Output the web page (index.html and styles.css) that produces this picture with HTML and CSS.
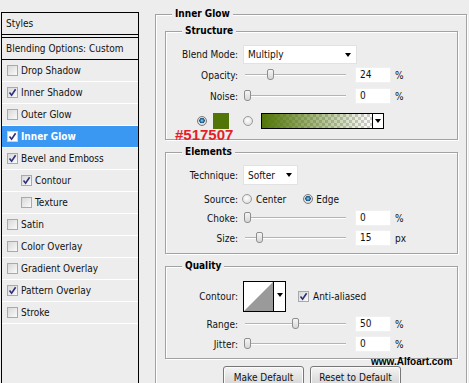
FILE: index.html
```html
<!DOCTYPE html>
<html>
<head>
<meta charset="utf-8">
<link rel="stylesheet" href="styles.css">
</head>
<body>
<div class="app">
  <aside class="sp">
    <div class="sp-head">Styles</div>
    <div class="sp-blend">Blending Options: Custom</div>
    <ul class="sp-list">
      <li class="sp-item"><span class="cb"></span>Drop Shadow</li>
      <li class="sp-item"><span class="cb on"><svg viewBox="0 0 9 9"><path d="M1.5 4.5 L3.6 7.2 L7.6 1.2"/></svg></span>Inner Shadow</li>
      <li class="sp-item"><span class="cb"></span>Outer Glow</li>
      <li class="sp-item sel"><span class="cb on"><svg viewBox="0 0 9 9"><path d="M1.5 4.5 L3.6 7.2 L7.6 1.2"/></svg></span>Inner Glow</li>
      <li class="sp-item"><span class="cb on"><svg viewBox="0 0 9 9"><path d="M1.5 4.5 L3.6 7.2 L7.6 1.2"/></svg></span>Bevel and Emboss</li>
      <li class="sp-item sub"><span class="cb on"><svg viewBox="0 0 9 9"><path d="M1.5 4.5 L3.6 7.2 L7.6 1.2"/></svg></span>Contour</li>
      <li class="sp-item sub"><span class="cb"></span>Texture</li>
      <li class="sp-item"><span class="cb"></span>Satin</li>
      <li class="sp-item"><span class="cb"></span>Color Overlay</li>
      <li class="sp-item"><span class="cb"></span>Gradient Overlay</li>
      <li class="sp-item"><span class="cb on"><svg viewBox="0 0 9 9"><path d="M1.5 4.5 L3.6 7.2 L7.6 1.2"/></svg></span>Pattern Overlay</li>
      <li class="sp-item"><span class="cb"></span>Stroke</li>
    </ul>
  </aside>

  <main class="dialog">
    <section class="grp outer">
      <div class="legend">Inner Glow</div>

      <section class="grp inner structure">
        <div class="legend">Structure</div>
        <div class="row r-blend">
          <span class="lbl">Blend Mode:</span>
          <div class="select sel-blend"><span>Multiply</span><i class="arr"></i></div>
        </div>
        <div class="row r-opacity">
          <span class="lbl">Opacity:</span>
          <div class="slider"><i class="track"></i><i class="thumb" style="left:24px"></i></div>
          <div class="num">24</div><span class="unit">%</span>
        </div>
        <div class="row r-noise">
          <span class="lbl">Noise:</span>
          <div class="slider"><i class="track"></i><i class="thumb" style="left:1px"></i></div>
          <div class="num">0</div><span class="unit">%</span>
        </div>
        <div class="row r-color">
          <i class="radio on r-first"></i>
          <i class="swatch"></i>
          <i class="radio r-second"></i>
          <div class="gradbox"><i class="grad"></i><i class="gradarr"><i class="arr"></i></i></div>
        </div>
        <div class="note">#517507</div>
      </section>

      <section class="grp inner elements">
        <div class="legend">Elements</div>
        <div class="row r-tech">
          <span class="lbl">Technique:</span>
          <div class="select sel-tech"><span>Softer</span><i class="arr"></i></div>
        </div>
        <div class="row r-source">
          <span class="lbl">Source:</span>
          <i class="radio src-a"></i><span class="opt">Center</span>
          <i class="radio on src-b"></i><span class="opt">Edge</span>
        </div>
        <div class="row r-choke">
          <span class="lbl">Choke:</span>
          <div class="slider"><i class="track"></i><i class="thumb" style="left:1px"></i></div>
          <div class="num">0</div><span class="unit">%</span>
        </div>
        <div class="row r-size">
          <span class="lbl">Size:</span>
          <div class="slider"><i class="track"></i><i class="thumb" style="left:13px"></i></div>
          <div class="num">15</div><span class="unit">px</span>
        </div>
      </section>

      <section class="grp inner quality">
        <div class="legend">Quality</div>
        <div class="row r-contour">
          <span class="lbl">Contour:</span>
          <div class="contour">
            <svg class="cpreview" viewBox="0 0 29 29" width="29" height="29"><rect width="29" height="29" fill="#fff"/><polygon points="0,29 29,0 29,29" fill="#9a9a9a"/></svg>
            <i class="carr"><i class="arr"></i></i>
          </div>
          <span class="cb on aa"><svg viewBox="0 0 9 9"><path d="M1.5 4.5 L3.6 7.2 L7.6 1.2"/></svg></span>
          <span class="opt">Anti-aliased</span>
        </div>
        <div class="row r-range">
          <span class="lbl">Range:</span>
          <div class="slider"><i class="track"></i><i class="thumb" style="left:49px"></i></div>
          <div class="num">50</div><span class="unit">%</span>
        </div>
        <div class="row r-jitter">
          <span class="lbl">Jitter:</span>
          <div class="slider"><i class="track"></i><i class="thumb" style="left:1px"></i></div>
          <div class="num">0</div><span class="unit">%</span>
        </div>
      </section>

      <div class="buttons">
        <button class="btn b-make">Make Default</button>
        <button class="btn b-reset">Reset to Default</button>
      </div>
    </section>
  </main>
</div>
<div class="watermark">www.Alfoart.com</div>
</body>
</html>
```

FILE: styles.css
```css
html, body {
  margin: 0;
  padding: 0;
  width: 469px;
  height: 383px;
  overflow: hidden;
}
body {
  background: #ededed;
  font-family: "DejaVu Sans Condensed", "DejaVu Sans", sans-serif;
  font-size: 10px;
  color: #111;
  position: relative;
}
.app {
  display: flex;
  align-items: flex-start;
}

/* ---------- styles panel ---------- */
.sp {
  box-sizing: border-box;
  width: 138px;
  height: 371px;
  margin: 12px 0 0 1px;
  border: 1px solid #000;
  border-bottom: none;
  background: #ededed;
}
.sp-head {
  height: 21px;
  line-height: 21px;
  padding-left: 4px;
  border-bottom: 1px solid #000;
}
.sp-blend {
  height: 21px;
  line-height: 21px;
  padding-left: 4px;
  margin-top: 2px;
  border-top: 1px solid #000;
  border-bottom: 1px solid #000;
}
.sp-list {
  list-style: none;
  margin: 0;
  padding: 0;
}
.sp-item {
  height: 21px;
  border-bottom: 1px solid #fff;
  display: flex;
  align-items: center;
  padding-left: 5px;
}
.sp-item.sub { padding-left: 19px; }
.sp-item.sel {
  background: #3a98f3;
  color: #fff;
  font-weight: bold;
}
.cb {
  box-sizing: border-box;
  width: 11px;
  height: 11px;
  border: 1px solid #a9a9a9;
  background: linear-gradient(135deg, #d8d8d8, #fafafa);
  margin-right: 3px;
  flex: none;
  display: flex;
}
.cb svg { width: 9px; height: 9px; }
.cb path {
  fill: none;
  stroke: #2d2f7a;
  stroke-width: 1.6;
}
.sel .cb { background: #fff; border-color: #d0d0d0; }

/* ---------- dialog ---------- */
.dialog {
  margin: 14px 0 0 16px;
}
.grp {
  box-sizing: border-box;
  border: 1px solid #a2a2a2;
  box-shadow: 1px 1px 0 #fff, inset 1px 1px 0 #fff;
  position: relative;
}
.outer {
  width: 312px;
  height: 369px;
  padding: 0 8px 0 9px;
  border-bottom: none;
}
.inner {
  width: 293px;
}
.legend {
  display: table;
  height: 12px;
  line-height: 12px;
  margin: -7px 0 0 7px;
  padding: 0 3px;
  background: #ededed;
  font-weight: bold;
  color: #000;
}
.inner .legend { margin-left: 16px; }
.structure { margin-top: 11px; padding-bottom: 10px; }
.elements { margin-top: 12px; padding-bottom: 7px; }
.quality { margin-top: 12px; padding-bottom: 6px; }

.row {
  display: flex;
  align-items: center;
  height: 16px;
}
.lbl {
  width: 72px;
  text-align: right;
  flex: none;
  margin-right: 5px;
}
.r-blend { margin-top: 8px; height: 19px; }
.r-opacity { margin-top: 3px; }
.r-noise { margin-top: 5px; }
.r-color { margin-top: 9px; }
.r-tech { margin-top: 7px; height: 20px; }
.r-source { margin-top: 6px; }
.r-choke { margin-top: 3px; }
.r-size { margin-top: 4px; }
.r-contour { margin-top: 9px; height: 31px; }
.r-range { margin-top: 4px; }
.r-jitter { margin-top: 4px; }

.select {
  box-sizing: border-box;
  height: 100%;
  background: #fff;
  border: 1px solid #e2e2e2;
  display: flex;
  align-items: center;
  justify-content: space-between;
  padding: 0 5px 0 4px;
}
.sel-blend { width: 114px; }
.sel-tech { width: 55px; }
.arr {
  display: block;
  width: 0;
  height: 0;
  border-left: 3.5px solid transparent;
  border-right: 3.5px solid transparent;
  border-top: 4px solid #000;
}

.slider {
  position: relative;
  width: 103px;
  height: 16px;
  flex: none;
}
.track {
  position: absolute;
  left: 2px;
  right: 0;
  top: 7px;
  height: 1px;
  background: #b4b4b4;
  border-bottom: 1px solid #fff;
}
.thumb {
  position: absolute;
  top: 2px;
  box-sizing: border-box;
  width: 7px;
  height: 11px;
  border: 1px solid #8e8e8e;
  border-radius: 2px 2px 3px 3px;
  background: linear-gradient(#f6f6f6, #d6d6d6);
}
.num {
  box-sizing: border-box;
  width: 36px;
  height: 16px;
  margin-left: 9px;
  background: #fff;
  border: 1px solid #f0f0f0;
  line-height: 14px;
  padding-left: 4px;
}
.unit { margin-left: 4px; }

.radio {
  box-sizing: border-box;
  display: block;
  width: 10px;
  height: 10px;
  border-radius: 50%;
  border: 1px solid #9a9a9a;
  background: radial-gradient(circle at 45% 40%, #fff, #d6d6d6);
  flex: none;
}
.radio.on {
  background: radial-gradient(circle at 50% 45%, #a8dcf5 0, #3b8cc0 22%, #1d4f78 42%, #e4e4e4 50%, #c8c8c8 100%);
  border-color: #7a7a7a;
}
.r-first { margin-left: 31px; }
.swatch {
  display: block;
  width: 16px;
  height: 16px;
  margin-left: 6px;
  background: #517507;
}
.r-second { margin-left: 14px; }
.gradbox {
  box-sizing: border-box;
  display: flex;
  width: 123px;
  height: 16px;
  margin-left: 8px;
  border: 1px solid #000;
}
.grad {
  display: block;
  flex: 1;
  background:
    linear-gradient(90deg, #517507, rgba(81,117,7,0.55) 45%, rgba(81,117,7,0) 100%),
    repeating-conic-gradient(#cfcfcf 0 25%, #fff 0 50%) 0 0 / 6px 6px;
}
.gradarr {
  box-sizing: border-box;
  display: flex;
  align-items: center;
  justify-content: center;
  width: 11px;
  border-left: 1px solid #000;
  background: #fff;
}
.note {
  position: absolute;
  left: 9px;
  top: 95px;
  font-family: "Liberation Sans", Arial, sans-serif;
  font-weight: bold;
  font-size: 15px;
  line-height: 15px;
  color: #e41f2b;
}

.src-a { margin-left: -1px; }
.opt { margin-left: 4px; }
.src-b { margin-left: 17px; }
.src-b + .opt { margin-left: 3px; }

.contour {
  box-sizing: border-box;
  display: flex;
  width: 43px;
  height: 31px;
  border: 1px solid #000;
  background: #fff;
}
.cpreview { display: block; flex: none; }
.carr {
  flex: 1;
  display: flex;
  align-items: center;
  justify-content: center;
  border-left: 1px solid #000;
  padding-bottom: 4px;
}
.aa { margin-left: 12px; margin-right: 0; }
.aa + .opt { margin-left: 4px; }

.buttons {
  display: flex;
  margin-top: 7px;
  padding-left: 58px;
  height: 18px;
  overflow: hidden;
}
.btn {
  box-sizing: border-box;
  height: 22px;
  border: 1px solid #777;
  border-radius: 3px;
  background: linear-gradient(#f4f4f4, #e2e2e2 50%, #d4d4d4);
  font-family: inherit;
  font-size: 10px;
  color: #111;
  padding: 0;
  box-shadow: inset 0 0 0 1px #fbfbfb;
}
.b-make { width: 81px; }
.b-reset { width: 91px; margin-left: 6px; }

.watermark {
  position: absolute;
  left: 371px;
  top: 356px;
  font-family: "Liberation Sans", Arial, sans-serif;
  font-weight: bold;
  font-size: 10px;
  line-height: 12px;
  color: #000;
}
```
